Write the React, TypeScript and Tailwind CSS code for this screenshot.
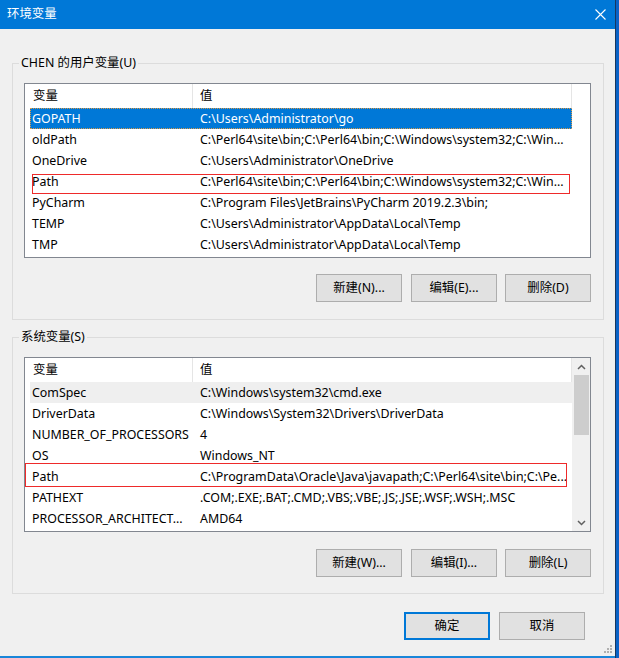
import type { ReactNode } from "react";

const font = "font-['Noto_Sans','Noto_Sans_CJK_SC',sans-serif]";

type Row = { name: string; value: string; state?: "selected" | "hover"; mark?: "user" | "system" };

const userRows: Row[] = [
  { name: "GOPATH", value: "C:\\Users\\Administrator\\go", state: "selected" },
  { name: "oldPath", value: "C:\\Perl64\\site\\bin;C:\\Perl64\\bin;C:\\Windows\\system32;C:\\Win..." },
  { name: "OneDrive", value: "C:\\Users\\Administrator\\OneDrive" },
  { name: "Path", value: "C:\\Perl64\\site\\bin;C:\\Perl64\\bin;C:\\Windows\\system32;C:\\Win...", mark: "user" },
  { name: "PyCharm", value: "C:\\Program Files\\JetBrains\\PyCharm 2019.2.3\\bin;" },
  { name: "TEMP", value: "C:\\Users\\Administrator\\AppData\\Local\\Temp" },
  { name: "TMP", value: "C:\\Users\\Administrator\\AppData\\Local\\Temp" },
];

const systemRows: Row[] = [
  { name: "ComSpec", value: "C:\\Windows\\system32\\cmd.exe", state: "hover" },
  { name: "DriverData", value: "C:\\Windows\\System32\\Drivers\\DriverData" },
  { name: "NUMBER_OF_PROCESSORS", value: "4" },
  { name: "OS", value: "Windows_NT" },
  { name: "Path", value: "C:\\ProgramData\\Oracle\\Java\\javapath;C:\\Perl64\\site\\bin;C:\\Pe...", mark: "system" },
  { name: "PATHEXT", value: ".COM;.EXE;.BAT;.CMD;.VBS;.VBE;.JS;.JSE;.WSF;.WSH;.MSC" },
  { name: "PROCESSOR_ARCHITECT...", value: "AMD64" },
];

function ListRow({ row }: { row: Row }) {
  const bg =
    row.state === "selected"
      ? "bg-[#0078d7] text-white outline outline-1 outline-dotted outline-[#d89a4a] -outline-offset-1"
      : row.state === "hover"
        ? "bg-[#efefef] text-black"
        : "text-black";
  return (
    <div className={`relative flex h-[21px] w-[542px] leading-[21px] ${bg}`}>
      <div className="w-[163px] overflow-hidden whitespace-nowrap pl-[2px]">{row.name}</div>
      <div className="w-[379px] overflow-hidden whitespace-nowrap pl-[7px]">{row.value}</div>
      {row.mark === "user" && (
        <div className="absolute left-[2px] top-[3px] h-[20px] w-[538px] border border-[#ee2a2a]" />
      )}
      {row.mark === "system" && (
        <div className="absolute left-[-5px] top-[-3px] h-[24px] w-[542px] border border-[#ee2a2a]" />
      )}
    </div>
  );
}

function Chevron({ up }: { up?: boolean }) {
  return (
    <svg width="9" height="6" viewBox="0 0 9 6" className="block">
      <path
        d={up ? "M1 5 L4.5 1.5 L8 5" : "M1 1 L4.5 4.5 L8 1"}
        fill="none"
        stroke="#606060"
        strokeWidth="1.5"
      />
    </svg>
  );
}

function ListView({ rows, scroll }: { rows: Row[]; scroll?: boolean }) {
  return (
    <div className="flex h-[175px] w-[567px] border border-[#828790] bg-white">
      <div className="w-[547px] pl-[5px]">
        <div className="flex h-[24px] w-[542px] items-center">
          <div className="h-full w-[163px] border-r border-[#e5e5e5] pl-[3px] leading-[24px]">变量</div>
          <div className="h-full w-[379px] border-r border-[#e5e5e5] pl-[7px] leading-[24px]">值</div>
        </div>
        {rows.map((r) => (
          <ListRow key={r.name + r.value} row={r} />
        ))}
      </div>
      {scroll && (
        <div className="flex w-[18px] flex-col items-center bg-[#f0f0f0]">
          <div className="flex h-[17px] items-center justify-center">
            <Chevron up />
          </div>
          <div className="h-[60px] w-[15px] bg-[#cdcdcd]" />
          <div className="flex-1" />
          <div className="flex h-[17px] items-center justify-center">
            <Chevron />
          </div>
        </div>
      )}
    </div>
  );
}

function Button({ children, primary }: { children: ReactNode; primary?: boolean }) {
  return (
    <button
      className={`h-[28px] w-[86px] bg-[#e1e1e1] text-black ${
        primary ? "border-2 border-[#0078d7]" : "border border-[#adadad]"
      }`}
    >
      {children}
    </button>
  );
}

function Group({
  label,
  rows,
  scroll,
  buttons,
  gap,
}: {
  label: string;
  rows: Row[];
  scroll?: boolean;
  buttons: string[];
  gap: string;
}) {
  return (
    <fieldset className="w-[592px] border border-[#dcdcdc]">
      <legend className="ml-[6px] px-[2px] leading-[16px]">{label}</legend>
      <div className={`px-[11px] pt-[12px] ${gap}`}>
        <ListView rows={rows} scroll={scroll} />
        <div className="flex justify-end pr-[1px]">
          <Button>{buttons[0]}</Button>
          <div className="w-[9px]" />
          <Button>{buttons[1]}</Button>
          <div className="w-[8px]" />
          <Button>{buttons[2]}</Button>
        </div>
      </div>
    </fieldset>
  );
}

export default function App() {
  return (
    <div className={`flex h-[658px] w-[619px] bg-[#0a62c6] text-[12.4px] ${font}`}>
      <div className="relative flex h-full w-[615px] flex-col border-b-2 border-[#1a86d9] bg-[#f0f0f0]">
        <header className="flex h-[29px] shrink-0 items-center justify-between bg-[#0078d7] pl-[7px] text-white">
          <span>环境变量</span>
          <div className="flex h-full w-[30px] items-center justify-center">
            <svg width="11" height="11" viewBox="0 0 11 11">
              <path d="M0.5 0.5 L10.5 10.5 M10.5 0.5 L0.5 10.5" stroke="white" strokeWidth="1.1" />
            </svg>
          </div>
        </header>

        <div className="flex flex-col pl-[12px]">
          <div className="mt-[26px]">
            <Group
              label="CHEN 的用户变量(U)"
              rows={userRows}
              buttons={["新建(N)...", "编辑(E)...", "删除(D)"]}
              gap="pb-[17px] [&>div:last-child]:mt-[16px]"
            />
          </div>
          <div className="mt-[9px]">
            <Group
              label="系统变量(S)"
              rows={systemRows}
              scroll
              buttons={["新建(W)...", "编辑(I)...", "删除(L)"]}
              gap="pb-[16px] [&>div:last-child]:mt-[17px]"
            />
          </div>
          <div className="mt-[18px] flex justify-end pr-[30px]">
            <Button primary>确定</Button>
            <div className="w-[9px]" />
            <Button>取消</Button>
          </div>
        </div>

        <div className="absolute bottom-[3px] right-[3px] grid grid-cols-3 gap-[1px]">
          <span className="h-[2px] w-[2px]" />
          <span className="h-[2px] w-[2px]" />
          <span className="h-[2px] w-[2px] bg-[#b0b0b0]" />
          <span className="h-[2px] w-[2px]" />
          <span className="h-[2px] w-[2px] bg-[#b0b0b0]" />
          <span className="h-[2px] w-[2px] bg-[#b0b0b0]" />
          <span className="h-[2px] w-[2px] bg-[#b0b0b0]" />
          <span className="h-[2px] w-[2px] bg-[#b0b0b0]" />
          <span className="h-[2px] w-[2px] bg-[#b0b0b0]" />
        </div>
      </div>
      <div className="h-full w-[1px] bg-[#17375f]" />
    </div>
  );
}
